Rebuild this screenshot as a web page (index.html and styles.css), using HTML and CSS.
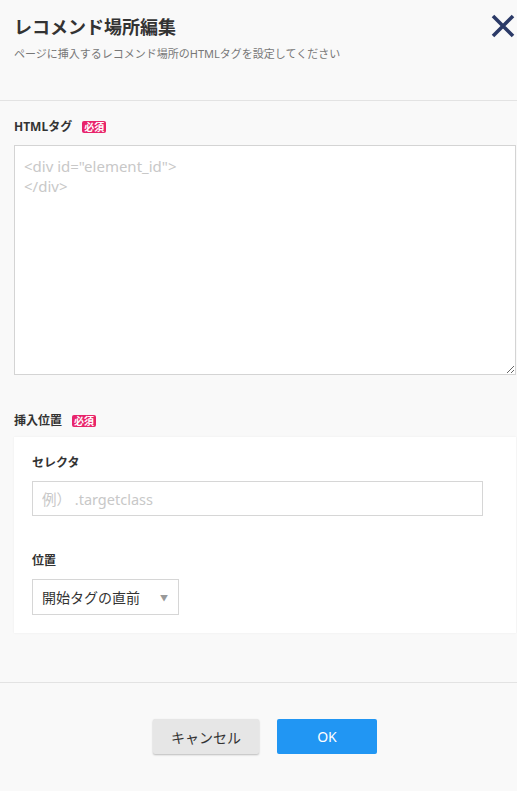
FILE: index.html
```html
<!DOCTYPE html>
<html lang="ja">
<head>
<meta charset="utf-8">
<title>レコメンド場所編集</title>
<link rel="stylesheet" href="styles.css">
</head>
<body>
<div class="modal">
  <header class="modal-header">
    <h1 class="title">レコメンド場所編集</h1>
    <p class="subtitle">ページに挿入するレコメンド場所のHTMLタグを設定してください</p>
    <button class="close" aria-label="閉じる">
      <svg width="24" height="24" viewBox="0 0 24 24"><path d="M2 2 L22 22 M22 2 L2 22" stroke="#2b3a67" stroke-width="3.6" fill="none"/></svg>
    </button>
  </header>
  <main class="modal-body">
    <div class="field-label">HTMLタグ <span class="badge">必須</span></div>
    <textarea class="code" placeholder="<div id=&quot;element_id&quot;>&#10;</div>"></textarea>
    <div class="field-label second">挿入位置 <span class="badge">必須</span></div>
    <section class="card">
      <div class="sub-label">セレクタ</div>
      <input class="text-input" type="text" placeholder="例）&nbsp;.targetclass">
      <div class="sub-label second">位置</div>
      <div class="select">
        <span>開始タグの直前</span>
        <span class="caret">▼</span>
      </div>
    </section>
  </main>
  <footer class="modal-footer">
    <button class="btn btn-cancel">キャンセル</button>
    <button class="btn btn-ok">OK</button>
  </footer>
</div>
</body>
</html>
```

FILE: styles.css
```css
html, body {
  margin: 0;
  padding: 0;
  overflow: hidden;
  background: #f9f9f9;
}
body {
  font-family: "Noto Sans", "Noto Sans CJK JP", sans-serif;
  color: #333;
}
.modal {
  width: 530px;
  height: 791px;
  background: #f9f9f9;
}
.modal-header {
  position: relative;
  padding: 14px 14px 38px;
  border-bottom: 1px solid #e3e3e3;
}
.title {
  margin: 0;
  font-size: 18px;
  line-height: 26px;
  font-weight: bold;
  color: #333;
}
.subtitle {
  margin: 6px 0 0;
  font-size: 11px;
  line-height: 16px;
  color: #777;
}
.close {
  position: absolute;
  top: 14px;
  left: 491px;
  padding: 0;
  border: 0;
  background: none;
  width: 24px;
  height: 24px;
}
.close svg { display: block; }
.modal-body {
  padding: 0 14px;
}
.field-label {
  margin-top: 17px;
  font-size: 12px;
  line-height: 18px;
  font-weight: bold;
  color: #333;
  display: flex;
  align-items: center;
  gap: 10px;
}
.field-label.second {
  margin-top: 37px;
}
.badge {
  display: inline-block;
  background: #e8246b;
  color: #fff;
  font-size: 10px;
  line-height: 12px;
  padding: 0 2px;
  border-radius: 2px;
  font-weight: bold;
}
.code {
  display: block;
  box-sizing: border-box;
  width: 502px;
  height: 230px;
  margin-top: 9px;
  border: 1px solid #d4d4d4;
  background: #fff;
  padding: 10px 9px;
  font-family: "Noto Sans", "Noto Sans CJK JP", sans-serif;
  font-size: 15px;
  line-height: 20px;
  color: #333;
  outline: none;
}
.code::placeholder {
  color: #c8c8c8;
}
.card {
  margin-top: 7px;
  background: #fff;
  box-shadow: 0 0 2px rgba(0,0,0,0.06);
  padding: 17px 18px 18px;
  width: 502px;
  box-sizing: border-box;
}
.sub-label {
  font-size: 12px;
  line-height: 18px;
  font-weight: bold;
  color: #333;
}
.sub-label.second {
  margin-top: 36px;
}
.text-input {
  display: block;
  box-sizing: border-box;
  margin-top: 9px;
  width: 451px;
  height: 35px;
  border: 1px solid #d6d6d6;
  padding: 0 9px;
  font-family: "Noto Sans", "Noto Sans CJK JP", sans-serif;
  font-size: 14.5px;
  color: #333;
  outline: none;
}
.text-input::placeholder {
  color: #c8c8c8;
}
.select {
  margin-top: 9px;
  box-sizing: border-box;
  width: 147px;
  height: 36px;
  border: 1px solid #d6d6d6;
  display: flex;
  align-items: center;
  justify-content: space-between;
  padding: 0 10px 0 9px;
  font-size: 14px;
  color: #333;
}
.caret {
  font-size: 8px;
  color: #999;
}
.modal-footer {
  margin-top: 49px;
  border-top: 1px solid #e3e3e3;
  padding-top: 36px;
  display: flex;
  justify-content: center;
  gap: 18px;
}
.btn {
  height: 35px;
  border: 0;
  border-radius: 2px;
  font-family: "Noto Sans", "Noto Sans CJK JP", sans-serif;
  font-size: 14px;
  padding: 0;
}
.btn-cancel {
  width: 106px;
  background: #e6e6e6;
  color: #333;
  box-shadow: 0 1px 2px rgba(0,0,0,0.25);
}
.btn-ok {
  width: 100px;
  background: #2196f3;
  color: #fff;
}
```
